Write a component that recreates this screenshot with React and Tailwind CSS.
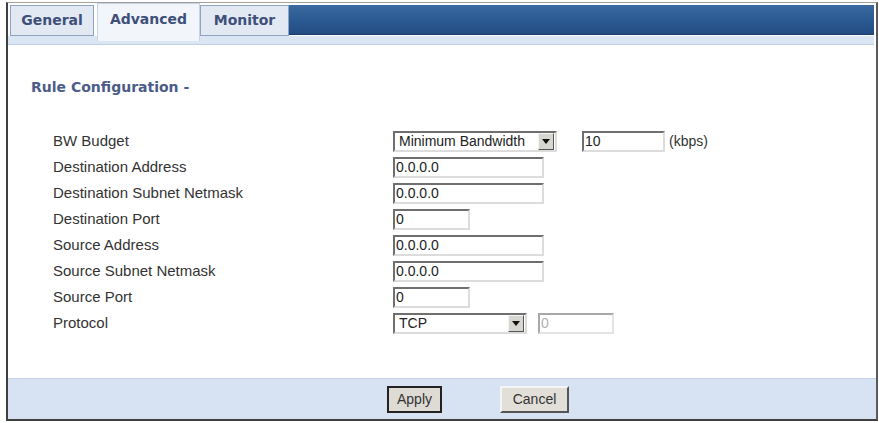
import React from "react";

const rows = [
  { label: "BW Budget", kind: "bw" },
  { label: "Destination Address", kind: "addr" },
  { label: "Destination Subnet Netmask", kind: "addr" },
  { label: "Destination Port", kind: "port" },
  { label: "Source Address", kind: "addr" },
  { label: "Source Subnet Netmask", kind: "addr" },
  { label: "Source Port", kind: "port" },
  { label: "Protocol", kind: "proto" },
];

const sans = { fontFamily: '"Liberation Sans", Arial, sans-serif' };
const heading = { fontFamily: '"DejaVu Sans", Verdana, sans-serif' };

// classic inset text box
const TextBox = ({ value, width, disabled }) => (
  <div
    className={`h-[21px] flex items-center pl-[1px] text-[14px] bg-white border-[2px] ${
      disabled
        ? "border-t-[#a8a8a8] border-l-[#a8a8a8] border-b-[#e4e4e4] border-r-[#e4e4e4] text-[#b0b0b0]"
        : "border-t-[#6f6f6f] border-l-[#6f6f6f] border-b-[#dcdcdc] border-r-[#dcdcdc] text-[#222]"
    }`}
    style={{ width }}
  >
    {value}
  </div>
);

const DropDown = ({ value, width }) => (
  <div
    className="h-[21px] flex items-center bg-white border-[2px] border-t-[#6f6f6f] border-l-[#6f6f6f] border-b-[#dcdcdc] border-r-[#dcdcdc]"
    style={{ width }}
  >
    <span className="flex-1 pl-[4px] text-[14px] text-[#222]">{value}</span>
    <div className="w-[16px] h-[17px] mr-[1px] flex items-center justify-center bg-[#d8d6d0] border border-t-[#f4f4f4] border-l-[#f4f4f4] border-b-[#555] border-r-[#555]">
      <svg width="8" height="5" viewBox="0 0 8 5">
        <path d="M0 0h8L4 5z" fill="#111" />
      </svg>
    </div>
  </div>
);

const Tab = ({ name, active, width }) => (
  <div
    className={`flex justify-center text-[14px] font-bold text-[#3e5079] border ${
      active
        ? "h-[38px] pt-[5px] items-start bg-[#f2f6fb] border-[#c7d2e2] border-b-0 self-start"
        : "h-[31px] mt-[2px] items-center bg-[#e2e9f3] border-[#8fa3c2]"
    }`}
    style={{ width, ...heading }}
  >
    {name}
  </div>
);

export default function App() {
  return (
    <div className="w-[879px] h-[423px] bg-white" style={sans}>
      <div className="ml-[6px] pt-[2px] w-[872px] h-[421px] flex flex-col">
        <div className="flex-1 flex flex-col border-l-2 border-r-2 border-b-2 border-l-[#3f3f3f] border-r-[#5a5a5a] border-b-[#3f3f3f] border-t border-t-[#a0a0a0]">
          {/* tab strip */}
          <div className="h-[33px] flex items-start relative z-10">
            <div className="w-[2px]" />
            <Tab name="General" width={84} />
            <div className="w-[3px]" />
            <Tab name="Advanced" width={103} active />
            <Tab name="Monitor" width={89} />
            <div className="flex-1 h-[30px] mt-[2px] mr-[2px] bg-gradient-to-b from-[#3b6aa0] via-[#2c5a93] to-[#244c84] border-b border-[#1d3d6c]" />
          </div>
          <div className="h-[9px] bg-[#dbe6f5] border-b border-[#c2d0e6] mr-[2px]" />

          {/* form body */}
          <div className="flex-1 flex flex-col">
            <div
              className="mt-[32px] ml-[23px] text-[14px] font-bold text-[#4b5b8a]"
              style={heading}
            >
              Rule Configuration -
            </div>
            <div className="mt-[30px] flex flex-col">
              {rows.map((r) => (
                <div key={r.label} className="h-[26px] flex items-center">
                  <div className="w-[385px] pl-[45px] text-[15px] text-[#333]">
                    {r.label}
                  </div>
                  {r.kind === "bw" && (
                    <div className="flex items-center">
                      <DropDown value="Minimum Bandwidth" width={164} />
                      <div className="w-[25px]" />
                      <TextBox value="10" width={83} />
                      <span className="ml-[4px] text-[14px] text-[#333]">(kbps)</span>
                    </div>
                  )}
                  {r.kind === "addr" && <TextBox value="0.0.0.0" width={151} />}
                  {r.kind === "port" && <TextBox value="0" width={77} />}
                  {r.kind === "proto" && (
                    <div className="flex items-center gap-[11px]">
                      <DropDown value="TCP" width={134} />
                      <TextBox value="0" width={76} disabled />
                    </div>
                  )}
                </div>
              ))}
            </div>
          </div>

          {/* button bar */}
          <div className="h-[41px] bg-[#d7e3f3] border-t border-[#c4d3e9] flex items-center pl-[379px] gap-[58px]">
            <button className="w-[55px] h-[27px] bg-[#dedbd4] border-2 border-[#222] text-[14px] text-[#333]">
              Apply
            </button>
            <button className="w-[69px] h-[27px] bg-[#e2dfd8] border-2 border-t-[#f5f5f5] border-l-[#f5f5f5] border-b-[#555] border-r-[#555] text-[14px] text-[#333]">
              Cancel
            </button>
          </div>
        </div>
      </div>
    </div>
  );
}
